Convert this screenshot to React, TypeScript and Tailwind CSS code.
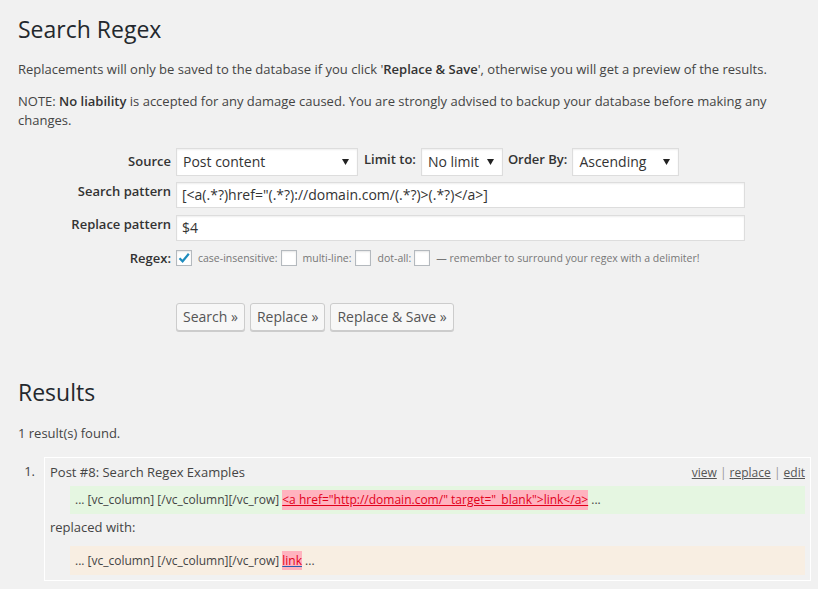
import React from 'react';

function Arrow() {
  return (
    <svg width="7" height="6" viewBox="0 0 7 6" className="shrink-0">
      <polygon points="0,0 7,0 3.5,6" fill="#222" />
    </svg>
  );
}

function FakeSelect({ value, width }: { value: string; width: string }) {
  return (
    <div
      className={`${width} h-[28px] flex items-center justify-between bg-white border border-[#ddd] shadow-[inset_0_1px_2px_rgba(0,0,0,0.07)] pl-[6px] pr-[8px] text-[14px] text-[#333]`}
    >
      <span>{value}</span>
      <Arrow />
    </div>
  );
}

function Check({ checked }: { checked?: boolean }) {
  return (
    <span className="w-[16px] h-[16px] bg-white border border-[#b4b9be] shadow-[inset_0_1px_2px_rgba(0,0,0,0.1)] flex items-center justify-center shrink-0">
      {checked && (
        <svg width="14" height="14" viewBox="0 0 14 14">
          <path d="M2.5 7.2 L5.6 10.3 L11.8 2.8" fill="none" stroke="#1e8cbe" strokeWidth="2.2" />
        </svg>
      )}
    </span>
  );
}

function Button({ children }: { children: React.ReactNode }) {
  return (
    <button className="h-[28px] px-[6px] bg-[#f7f7f7] border border-[#ccc] rounded-[3px] shadow-[0_1px_0_#ccc] text-[14px] text-[#555] leading-none">
      {children}
    </button>
  );
}

export default function App() {
  return (
    <div className="min-h-[589px] bg-[#f1f1f1] text-[#444] font-['Open_Sans',sans-serif] text-[13px] leading-[19.5px] pl-[18px] pr-[7px] pt-[15px]">
      <h2 className="text-[23px] leading-[29px] text-[#23282d]">Search Regex</h2>
      <p className="mt-[16px]">
        Replacements will only be saved to the database if you click '<b className="font-semibold text-[#333]">Replace &amp; Save</b>', otherwise you will get a preview of the results.
      </p>
      <p className="mt-[12px] pr-[25px]">
        NOTE: <b className="font-semibold text-[#333]">No liability</b> is accepted for any damage caused. You are strongly advised to backup your database before making any changes.
      </p>

      <div className="mt-[17px] flex flex-col gap-[6px]">
        <div className="flex items-start gap-[5px]">
          <div className="w-[153px] text-right font-semibold text-[#333] pt-[4px]">Source</div>
          <FakeSelect value="Post content" width="w-[182px]" />
          <div className="ml-[1px] font-semibold text-[#333] pt-[2px]">Limit to:</div>
          <FakeSelect value="No limit" width="w-[82px]" />
          <div className="font-semibold text-[#333] pt-[2px]">Order By:</div>
          <FakeSelect value="Ascending" width="w-[107px]" />
        </div>
        <div className="flex items-start gap-[5px]">
          <div className="w-[153px] text-right font-semibold text-[#333]">Search pattern</div>
          <div className="w-[569px] h-[26px] bg-white border border-[#ddd] shadow-[inset_0_1px_2px_rgba(0,0,0,0.07)] px-[5px] flex items-center text-[14px] text-[#333]">
            [&lt;a(.*?)href="(.*?)://domain.com/(.*?)&gt;(.*?)&lt;/a&gt;]
          </div>
        </div>
        <div className="flex items-start gap-[5px] mt-[1px]">
          <div className="w-[153px] text-right font-semibold text-[#333]">Replace pattern</div>
          <div className="w-[569px] h-[26px] bg-white border border-[#ddd] shadow-[inset_0_1px_2px_rgba(0,0,0,0.07)] px-[5px] flex items-center text-[14px] text-[#333]">
            $4
          </div>
        </div>
        <div className="flex items-center gap-[5px] mt-[2px]">
          <div className="w-[153px] text-right font-semibold text-[#333]">Regex:</div>
          <div className="flex items-center text-[10.5px] text-[#777]">
            <Check checked />
            <span className="ml-[6px]">case-insensitive:</span>
            <span className="ml-[3px]"><Check /></span>
            <span className="ml-[6px]">multi-line:</span>
            <span className="ml-[3px]"><Check /></span>
            <span className="ml-[7px]">dot-all:</span>
            <span className="ml-[3px]"><Check /></span>
            <span className="ml-[6px]">— remember to surround your regex with a delimiter!</span>
          </div>
        </div>
      </div>

      <div className="mt-[35px] ml-[158px] flex gap-[5px]">
        <Button>Search »</Button>
        <Button>Replace »</Button>
        <Button>Replace &amp; Save »</Button>
      </div>

      <h2 className="mt-[47px] text-[23px] leading-[29px] text-[#23282d]">Results</h2>
      <p className="mt-[17px]">1 result(s) found.</p>

      <div className="mt-[13px] flex">
        <div className="w-[26px] text-right pr-[9px] pt-[5px]">1.</div>
        <div className="flex-1 border border-white pl-[5px] pr-[5px] pt-[5px] pb-[5px]">
          <div className="flex justify-between">
            <span>Post #8: Search Regex Examples</span>
            <span className="text-[12px] text-[#999]">
              <a className="underline text-[#555]">view</a> | <a className="underline text-[#555]">replace</a> | <a className="underline text-[#555]">edit</a>
            </span>
          </div>
          <div className="mt-[4px] ml-[20px] h-[28px] flex items-center bg-[#e5f6e1] px-[5px] text-[12px]">
            ... [vc_column] [/vc_column][/vc_row]&nbsp;<span className="bg-[#ffb3bf] text-[#e2001a] underline">&lt;a href="http://domain.com/" target="_blank"&gt;link&lt;/a&gt;</span>&nbsp;...
          </div>
          <div className="mt-[2px] h-[24px] flex items-center">replaced with:</div>
          <div className="mt-[6px] ml-[20px] h-[29px] flex items-center bg-[#f8eee2] px-[5px] text-[12px]">
            ... [vc_column] [/vc_column][/vc_row]&nbsp;<span className="bg-[#ffb3bf] text-[#e2001a] underline decoration-[#2a5db0]">link</span>&nbsp;...
          </div>
        </div>
      </div>
    </div>
  );
}
